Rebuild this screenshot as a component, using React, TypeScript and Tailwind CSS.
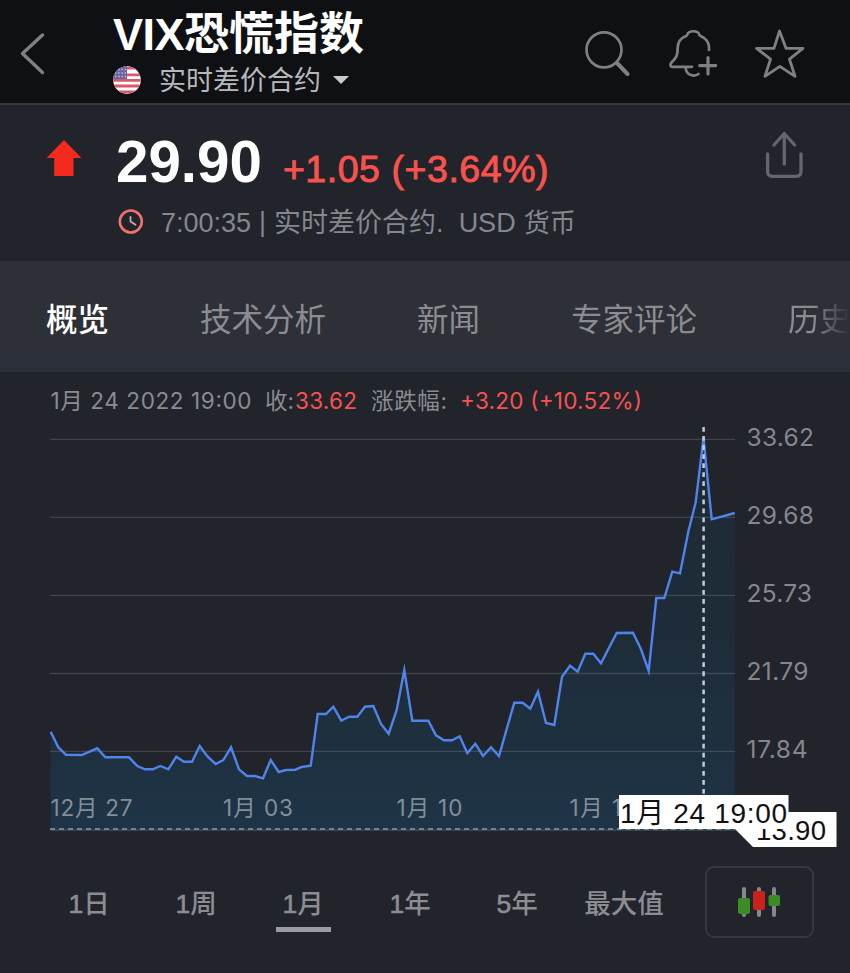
import React from "react";

const SANS = "font-['Liberation_Sans','Noto_Sans_CJK_SC',sans-serif]";

const points: [number, number][] = [
  [50.7, 731.7], [58.3, 747.3], [66, 754.7], [81.7, 755], [97.3, 748.3], [105.3, 757.3], [129, 757.3],
  [137.3, 766], [145, 769.3], [152.7, 769.3], [160.3, 766], [168.3, 769.3], [176.3, 756.7], [184, 761.7],
  [192, 761.7], [199.7, 746], [207.7, 756.7], [215.7, 764], [223.3, 760], [231, 747.3], [239, 769.3],
  [247, 776], [255, 776], [263, 778.3], [270.7, 760], [278.7, 772], [286, 770], [295.3, 769.7],
  [301.7, 767], [310.7, 765.7], [317.7, 714], [326, 714], [333.3, 706.7], [341.3, 720.7], [349, 716.7],
  [357.3, 716.7], [365, 706.7], [373.3, 706], [381, 724], [388.7, 733.7], [396.7, 710], [404.3, 670],
  [412.3, 720.7], [428.3, 720.7], [436, 735.3], [444, 740.3], [452, 740.3], [459.7, 736.3], [467.3, 753],
  [475.3, 743.7], [483, 756], [491, 747.3], [499, 756], [506.7, 729], [514.3, 702.7], [522.7, 702.7],
  [530.3, 708.7], [538, 691.7], [546, 723], [554.3, 725], [562, 676.7], [570, 665.7], [577.7, 671.7],
  [585.3, 653.7], [593.3, 653.7], [601, 663.3], [609, 647.7], [616.7, 633], [633, 632.7], [641, 649.3],
  [648.7, 671], [656.3, 598], [664.3, 598], [672.3, 571.7], [680, 573.3], [688.3, 531.7], [695.7, 502.3],
  [703.5, 438], [711.7, 519.3], [734.7, 513],
];

const line = points.map(([x, y]) => `${x},${y}`).join(" ");
const area = `50.7,829 ${line} 734.7,829`;

const levels = [
  { y: 439.4, label: "33.62", w: 67 },
  { y: 517.4, label: "29.68", w: 67 },
  { y: 595.4, label: "25.73", w: 65 },
  { y: 673.5, label: "21.79", w: 61.5 },
  { y: 751.4, label: "17.84", w: 60.5 },
];

const dates = [
  { x: 50.5, label: "12月 27", w: 82 },
  { x: 223, label: "1月 03", w: 70 },
  { x: 396.5, label: "1月 10", w: 66 },
  { x: 569.5, label: "1月 17", w: 66 },
];

function Header() {
  return (
    <header className="flex h-[105px] border-b-2 border-[#38393b] bg-[#0f1014]">
      <svg className="ml-[18px] mt-[30px] h-12 w-8 shrink-0" viewBox="0 0 32 48" fill="none" stroke="#7f8084" strokeWidth="3.4" strokeLinecap="round" strokeLinejoin="round">
        <path d="M24.5 5 4.5 23.5 24.5 42.5" />
      </svg>
      <div className="ml-[63px] w-[471px] shrink-0">
        <h1 className="mt-[7px] h-[55px] whitespace-nowrap text-[45px] font-bold leading-[56px] text-white">
          <span className="tracking-[-0.5px]">VIX</span>恐慌指数
        </h1>
        <div className="flex h-9 items-center">
          <svg className="h-7 w-7" viewBox="0 0 28 28">
            <defs>
              <clipPath id="flag"><circle cx="14" cy="14" r="13.8" /></clipPath>
            </defs>
            <g clipPath="url(#flag)">
              <rect width="28" height="28" fill="#fff" />
              <path d="M0 2.200h28M0 8.800h28M0 14.400h28M0 20h28M0 25.800h28" stroke="#d9596a" strokeWidth="2.800" />
              <rect width="14" height="13" fill="#6a639f" />
              <path d="M2 3.500h12M2 7h12M2 10.500h12" stroke="#c4c0e0" strokeWidth="1.300" strokeDasharray="1.400 1.800" />
            </g>
          </svg>
          <span className="ml-[18px] mt-px text-[27px] leading-9 text-[#b7b8bb]">实时差价合约</span>
          <span className="ml-[12px] h-0 w-0 border-x-8 border-t-8 border-x-transparent border-t-[#c9cace]" />
        </div>
      </div>
      <svg className="mt-[30px] h-[50px] w-[50px] shrink-0" viewBox="0 0 50 50" fill="none" stroke="#7f8084" strokeLinecap="round">
        <circle cx="20" cy="19.800" r="17.500" strokeWidth="2.700" />
        <path d="m33 33 10.500 11" strokeWidth="4" />
      </svg>
      <svg className="ml-[34px] mt-[28px] h-[52px] w-[50px] shrink-0" viewBox="668 28 50 52" fill="none" stroke="#7f8084" strokeWidth="2.700" strokeLinecap="round" strokeLinejoin="round">
        <path d="M709 50v-2c0-5-3-9.500-7.500-11.500-1-.4-2-.8-2.200-1.700-1-4.700-11-4.700-12 0-.2.900-1.200 1.300-2.200 1.700-5 2-7.300 6.500-7.400 11.500-.2 8-1.200 9.500-6.200 14.500-1.600 1.600-1.300 4.300.8 4.300H692M685.700 67.500c.3 9 9.500 9 12.800 6.500" />
        <path d="M708 57.500v16.500M699.700 65.600h16" strokeWidth="3.200" />
      </svg>
      <svg className="ml-[36px] mt-[28px] h-[52px] w-[52px] shrink-0" viewBox="754 28 52 52" fill="none" stroke="#7f8084" strokeWidth="2.800" strokeLinejoin="round">
        <path d="M779.500 31 786 48.300H803L789.500 59.200 795 76.300 779.800 66.300 765 76.300 770.500 59.200 756.500 48.300H774Z" />
      </svg>
    </header>
  );
}

function Quote() {
  return (
    <section className="flex h-[156px] bg-[#21242b]">
      <svg className="ml-[46px] mt-[35px] h-[38px] w-9 shrink-0" viewBox="0 0 36 38">
        <path d="M18 0 35.500 18H27.500V36H8.200V18H.5Z" fill="#f42b1c" />
      </svg>
      <div className="ml-[34px] w-[647px] shrink-0">
        <div className="mt-[22px] flex h-[70px] items-baseline whitespace-nowrap">
          <span className="text-[58.300px] font-bold leading-[70px] text-white">29.90</span>
          <span className="ml-[21px] text-[37.500px] leading-[40px] tracking-[0.55px] text-[#f8524d] [-webkit-text-stroke:0.9px_#f8524d]">+1.05 (+3.64%)</span>
        </div>
        <div className="mt-[7px] flex h-9 items-center whitespace-nowrap text-[27px] leading-9 text-[#85878c]">
          <svg className="ml-[2px] h-[26px] w-[26px]" viewBox="0 0 26 26" fill="none" strokeLinecap="round">
            <circle cx="12.800" cy="12.500" r="11" stroke="#f2706d" strokeWidth="2.600" />
            <path d="M12.500 8v4.500l5 3.300" stroke="#c8aaad" strokeWidth="1.800" />
          </svg>
          <span className="ml-[17px] mt-px">7:00:35</span>
          <span className="ml-[8px]">|</span>
          <span className="ml-[8px] mt-px">实时差价合约.</span>
          <span className="ml-[15px] mt-px">USD</span>
          <span className="ml-2 mt-px text-[26px]">货币</span>
        </div>
      </div>
      <svg className="mt-[25px] h-[52px] w-[42px] shrink-0" viewBox="763 130 42 52" fill="none" stroke="#65666b" strokeWidth="3.300" strokeLinecap="round" strokeLinejoin="round">
        <path d="M784.300 133.500V164M774 145l10.300-11.500L794.600 145M767.600 154v17.500q0 4.800 4.800 4.800h23.800q4.800 0 4.800-4.800V154" />
      </svg>
    </section>
  );
}

function Tabs() {
  return (
    <nav className="flex h-[111px] items-center gap-[91px] overflow-hidden whitespace-nowrap bg-linear-to-b from-[#2e3038] from-75% to-[#2a303a] pl-[46px] pt-[8px] text-[31.500px] text-[#8b8c90]">
      <span className="font-medium text-white">概览</span>
      <span>技术分析</span>
      <span>新闻</span>
      <span>专家评论</span>
      <span className="bg-linear-to-r from-[#8b8c90] from-40% to-[#2e3038] to-98% bg-clip-text text-transparent">历史</span>
    </nav>
  );
}

function Chart() {
  return (
    <svg className="block h-[478px] w-full font-[Inter,'Noto_Sans_CJK_SC',sans-serif]" viewBox="0 372 850 478">
      <defs>
        <linearGradient id="fill" gradientUnits="userSpaceOnUse" x1="0" y1="438" x2="0" y2="829">
          <stop offset="0" stopColor="#1e2b36" />
          <stop offset="0.5" stopColor="#1e2c39" />
          <stop offset="0.78" stopColor="#1e303f" />
          <stop offset="1" stopColor="#1f3448" />
        </linearGradient>
      </defs>
      <g fontSize="22.500" fill="#8a8c90">
        <text x="50.500" y="408.500" textLength="201">1月 24 2022 19:00</text>
        <text x="265" y="408.500" textLength="29">收:</text>
        <text x="295" y="408.500" textLength="62" fill="#f8524d">33.62</text>
        <text x="371" y="408.500" textLength="76">涨跌幅:</text>
        <text x="460" y="408.500" textLength="182" fill="#f8524d">+3.20 (+10.52%)</text>
      </g>
      <polygon points={area} fill="url(#fill)" />
      {levels.map(({ y, label, w }) => (
        <g key={label}>
          <path d={`M50 ${y}H735`} stroke="#8a8c90" strokeOpacity="0.3" strokeWidth="1.300" />
          <text x="746.500" y={y + 6.800} fontSize="24.500" textLength={w + 0.5} fill="#85878b">{label}</text>
        </g>
      ))}
      <polyline points={line} fill="none" stroke="#4f84ea" strokeWidth="2.400" strokeLinejoin="miter" strokeMiterlimit="8" />
      {dates.map(({ x, label, w }) => (
        <text key={label} x={x} y="816" fontSize="22.500" textLength={w} fill="#828f99">{label}</text>
      ))}
      <path d="M50 830H735" stroke="#4f6370" strokeWidth="1" />
      <path d="M50 829H735" stroke="#8b9aa4" strokeWidth="1.500" strokeDasharray="5 4" />
      <path d="M703.600 427V795" stroke="#c3ccd3" strokeWidth="2.500" strokeDasharray="4.800 4.250" />
      <path d="M735 829 748 812H836.500V847H753Z" fill="#fff" />
      <g className="font-['Liberation_Sans','Noto_Sans_CJK_SC',sans-serif]" fill="#111">
        <text x="756" y="840" fontSize="27.500" textLength="70">13.90</text>
        <rect x="619" y="795" width="169.500" height="34" fill="#fff" />
        <text x="620" y="822.500" fontSize="28" textLength="167">1月 24 19:00</text>
      </g>
    </svg>
  );
}

const ranges = ["1日", "1周", "1月", "1年", "5年", "最大值"];

function Ranges() {
  return (
    <div className="flex h-[123px] pl-[35.500px] pt-4">
      {ranges.map((r) => (
        <div key={r} className="flex w-[107px] shrink-0 flex-col items-center text-[26.500px] font-medium leading-9 text-[#8b8d92]">
          <span className="mt-[20px] whitespace-nowrap">
            <span className="[-webkit-text-stroke:0.6px_#8b8d92]">{r.replace(/\D/g, "")}</span>
            {r.replace(/\d/g, "")}
          </span>
          {r === "1月" && <span className="mt-[5px] h-[5px] w-[55px] bg-[#9a9ca4]" />}
        </div>
      ))}
      <button className="ml-[27.500px] flex h-[72px] w-[109px] items-center justify-center rounded-[9px] border-2 border-[#37383b]">
        <svg className="-ml-[2px] h-8 w-11" viewBox="0 0 44 32">
          <path d="M7 3v26M22 3v26M37 3v26" stroke="#85878c" strokeWidth="4" strokeLinecap="round" />
          <rect x="1" y="12" width="12" height="16" rx="2" fill="#3b8c27" />
          <rect x="16" y="5" width="12" height="19" rx="2" fill="#c8221b" />
          <rect x="31.500" y="9" width="11.500" height="11" rx="2" fill="#3b8c27" />
        </svg>
      </button>
    </div>
  );
}

export default function App() {
  return (
    <main className={`h-[973px] w-[850px] overflow-hidden bg-[#21242b] ${SANS}`}>
      <Header />
      <Quote />
      <Tabs />
      <Chart />
      <Ranges />
    </main>
  );
}
